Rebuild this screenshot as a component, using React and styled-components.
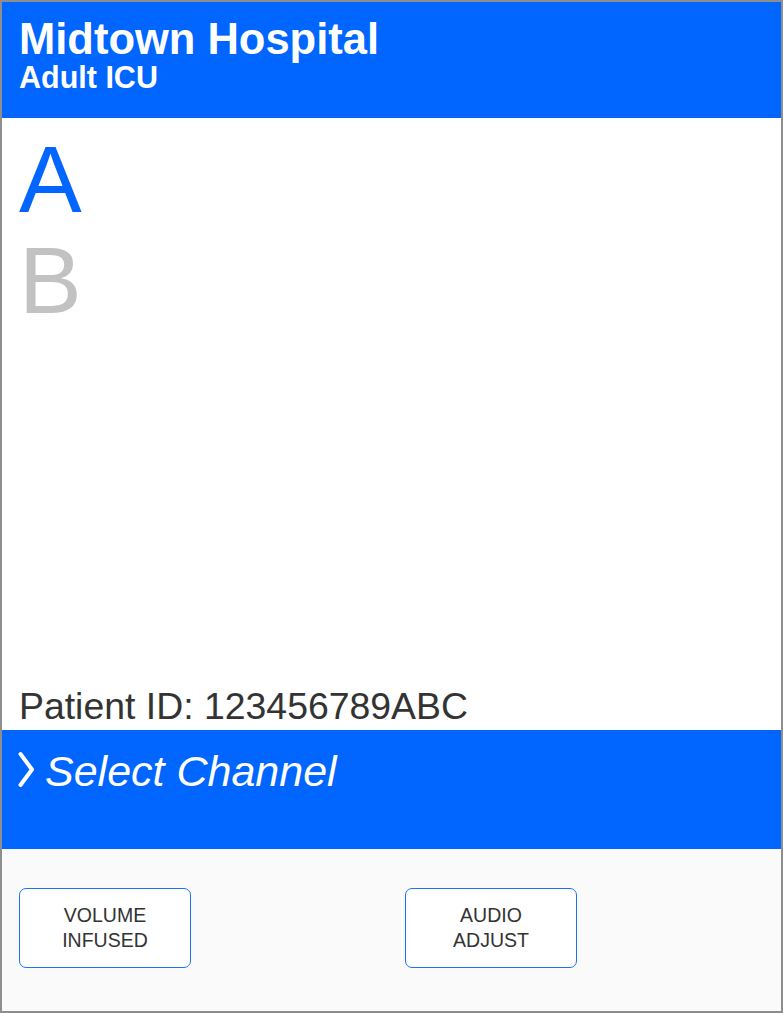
import styled, { createGlobalStyle } from 'styled-components';

const GlobalStyle = createGlobalStyle`
  html, body {
    margin: 0;
    padding: 0;
    background: #ffffff;
  }
  * {
    box-sizing: border-box;
  }
`;

export default function App() {
  return (
    <>
      <GlobalStyle />
      <Frame>
        <Header>
          <Title>Midtown Hospital</Title>
          <Subtitle>Adult ICU</Subtitle>
        </Header>
        <Main>
          <Channel active>A</Channel>
          <Channel>B</Channel>
          <PatientId>Patient ID: 123456789ABC</PatientId>
        </Main>
        <SelectBar>
          <Chevron viewBox="0 0 18 38" aria-hidden="true">
            <polyline points="2.5,4 14,19.5 2.5,35" />
          </Chevron>
          <SelectLabel>Select Channel</SelectLabel>
        </SelectBar>
        <Footer>
          <ActionButton>VOLUME<br />INFUSED</ActionButton>
          <ActionButton>AUDIO<br />ADJUST</ActionButton>
        </Footer>
      </Frame>
    </>
  );
}

const Frame = styled.div`
  width: 783px;
  height: 1013px;
  border: 2px solid #8e8e8e;
  display: flex;
  flex-direction: column;
  font-family: "Liberation Sans", Arial, sans-serif;
  background: #ffffff;
`;

const Header = styled.div`
  height: 116px;
  flex-shrink: 0;
  background: #0066ff;
  color: #ffffff;
  padding: 16px 0 0 17px;
  display: flex;
  flex-direction: column;
`;

const Title = styled.div`
  font-size: 43.5px;
  line-height: 42px;
  font-weight: 700;
`;

const Subtitle = styled.div`
  margin-top: 3px;
  font-size: 30.5px;
  line-height: 29px;
  font-weight: 700;
`;

const Main = styled.div`
  flex: 1;
  display: flex;
  flex-direction: column;
  padding: 15px 0 6px 17px;
`;

const Channel = styled.div`
  font-size: 94px;
  line-height: 94px;
  color: ${(p) => (p.active ? '#0066ff' : '#c2c2c2')};
  margin-bottom: 7px;
`;

const PatientId = styled.div`
  margin-top: auto;
  font-size: 37.4px;
  line-height: 36px;
  color: #333333;
`;

const SelectBar = styled.div`
  height: 119px;
  flex-shrink: 0;
  background: #0066ff;
  display: flex;
  align-items: flex-start;
  padding: 20px 0 0 16px;
  color: #ffffff;
`;

const Chevron = styled.svg`
  width: 18px;
  height: 38px;
  margin-right: 9px;
  flex-shrink: 0;
  fill: none;
  stroke: #ffffff;
  stroke-width: 4;
  stroke-linecap: round;
  stroke-linejoin: round;
`;

const SelectLabel = styled.div`
  font-size: 43px;
  line-height: 43px;
  font-style: italic;
`;

const Footer = styled.div`
  height: 162px;
  flex-shrink: 0;
  background: #fafafa;
  display: flex;
  align-items: flex-start;
  gap: 214px;
  padding: 39px 0 0 17px;
`;

const ActionButton = styled.div`
  width: 172px;
  height: 80px;
  border: 1.5px solid #1f6fff;
  border-radius: 7px;
  background: #ffffff;
  display: flex;
  align-items: center;
  justify-content: center;
  text-align: center;
  font-size: 19.5px;
  line-height: 25px;
  color: #333333;
`;
